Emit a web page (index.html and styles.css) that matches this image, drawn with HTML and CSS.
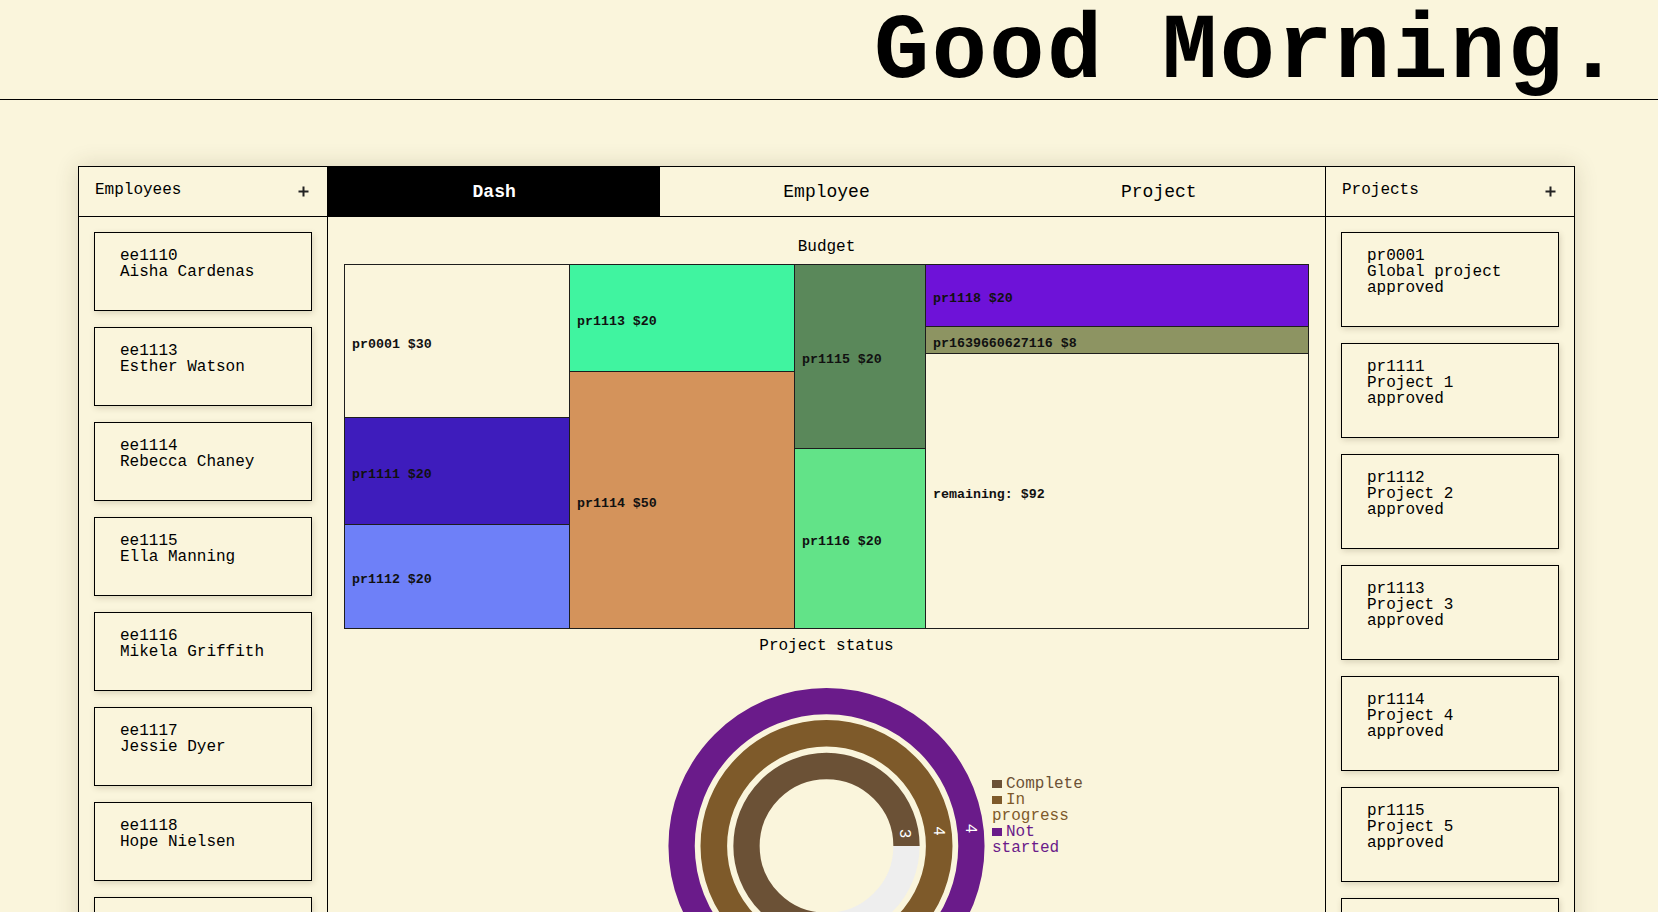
FILE: index.html
```html
<!DOCTYPE html>
<html lang="en">
<head>
<meta charset="utf-8">
<title>Dashboard</title>
<link rel="stylesheet" href="styles.css">
</head>
<body>
<header class="top">
  <h1 class="greeting">Good Morning.</h1>
</header>
<main class="board">
  <aside class="side side-left">
    <div class="side-head">
      <span class="side-title">Employees</span>
      <button class="add" type="button" aria-label="Add employee">
        <svg width="11" height="11" viewBox="0 0 11 11"><path d="M5.5 0.5v10M0.5 5.5h10" stroke="#222" stroke-width="2" fill="none"/></svg>
      </button>
    </div>
    <div class="card-list">
      <div class="card"><div>ee1110</div><div>Aisha Cardenas</div></div>
      <div class="card"><div>ee1113</div><div>Esther Watson</div></div>
      <div class="card"><div>ee1114</div><div>Rebecca Chaney</div></div>
      <div class="card"><div>ee1115</div><div>Ella Manning</div></div>
      <div class="card"><div>ee1116</div><div>Mikela Griffith</div></div>
      <div class="card"><div>ee1117</div><div>Jessie Dyer</div></div>
      <div class="card"><div>ee1118</div><div>Hope Nielsen</div></div>
      <div class="card"><div>ee1119</div><div>Nina Holt</div></div>
    </div>
  </aside>

  <section class="center">
    <nav class="tabs">
      <div class="tab active">Dash</div>
      <div class="tab">Employee</div>
      <div class="tab">Project</div>
    </nav>
    <div class="dash">
      <div class="chart-title">Budget</div>
      <div class="treemap">
        <div class="tm-col" style="width:224px">
          <div class="tm-cell cream" style="height:152px"><span>pr0001 $30</span></div>
          <div class="tm-cell indigo" style="height:107px"><span>pr1111 $20</span></div>
          <div class="tm-cell periwinkle" style="flex:1"><span>pr1112 $20</span></div>
        </div>
        <div class="tm-col" style="width:225px">
          <div class="tm-cell mint" style="height:106px"><span>pr1113 $20</span></div>
          <div class="tm-cell tan" style="flex:1"><span>pr1114 $50</span></div>
        </div>
        <div class="tm-col" style="width:131px">
          <div class="tm-cell fern" style="height:183px"><span>pr1115 $20</span></div>
          <div class="tm-cell lime" style="flex:1"><span>pr1116 $20</span></div>
        </div>
        <div class="tm-col" style="flex:1">
          <div class="tm-cell violet" style="height:61px"><span>pr1118 $20</span></div>
          <div class="tm-cell olive" style="height:27px"><span>pr1639660627116 $8</span></div>
          <div class="tm-cell cream" style="flex:1"><span>remaining: $92</span></div>
        </div>
      </div>
      <div class="chart-title">Project status</div>
      <div class="status">
        <svg class="rings" width="965" height="360" viewBox="0 0 965 360">
          <circle cx="482.5" cy="192" r="144.9" fill="none" stroke="#6a1b8a" stroke-width="26.3"/>
          <circle cx="482.5" cy="192" r="112.7" fill="none" stroke="#7e5a2a" stroke-width="26.6"/>
          <path d="M482.5 272 A80 80 0 0 0 562.5 192" fill="none" stroke="#eeeeee" stroke-width="26.3"/>
          <path d="M562.5 192 A80 80 0 1 0 482.5 272" fill="none" stroke="#6b5136" stroke-width="26.3"/>
          <text class="ring-label" transform="translate(559.5 179.5) rotate(90)">3</text>
          <text class="ring-label" transform="translate(593.5 177) rotate(90)">4</text>
          <text class="ring-label" transform="translate(625.5 174.5) rotate(90)">4</text>
        </svg>
        <div class="legend">
          <div class="legend-item complete"><i class="swatch"></i>Complete</div>
          <div class="legend-item progress"><i class="swatch"></i>In progress</div>
          <div class="legend-item notstarted"><i class="swatch"></i>Not started</div>
        </div>
      </div>
    </div>
  </section>

  <aside class="side side-right">
    <div class="side-head">
      <span class="side-title">Projects</span>
      <button class="add" type="button" aria-label="Add project">
        <svg width="11" height="11" viewBox="0 0 11 11"><path d="M5.5 0.5v10M0.5 5.5h10" stroke="#222" stroke-width="2" fill="none"/></svg>
      </button>
    </div>
    <div class="card-list">
      <div class="card"><div>pr0001</div><div>Global project</div><div>approved</div></div>
      <div class="card"><div>pr1111</div><div>Project 1</div><div>approved</div></div>
      <div class="card"><div>pr1112</div><div>Project 2</div><div>approved</div></div>
      <div class="card"><div>pr1113</div><div>Project 3</div><div>approved</div></div>
      <div class="card"><div>pr1114</div><div>Project 4</div><div>approved</div></div>
      <div class="card"><div>pr1115</div><div>Project 5</div><div>approved</div></div>
      <div class="card"><div>pr1116</div><div>Project 6</div><div>approved</div></div>
    </div>
  </aside>
</main>
</body>
</html>
```

FILE: styles.css
```css
html, body {
  margin: 0;
  padding: 0;
  overflow: hidden;
}

body {
  background: #faf5dc;
  color: #000;
  font-family: "Courier New", "Liberation Mono", monospace;
  font-size: 16px;
}

.top {
  height: 99px;
  border-bottom: 1px solid #000;
  box-sizing: content-box;
}

.greeting {
  margin: 0;
  padding: 0 35px 0 0;
  font-size: 92px;
  line-height: normal;
  letter-spacing: 2.4px;
  font-weight: bold;
  text-align: right;
}

.board {
  display: grid;
  grid-template-columns: 249px 997px 249px;
  width: 1495px;
  margin: 66px 0 0 78px;
  border: 1px solid #000;
  box-shadow: 0 0 22px rgba(60, 50, 20, 0.16);
  background: #faf5dc;
}

.side-left {
  border-right: 1px solid #000;
}

.side-right {
  border-left: 1px solid #000;
}

.side-head {
  height: 49px;
  border-bottom: 1px solid #000;
  display: flex;
  align-items: center;
  justify-content: space-between;
  padding: 0 18px 0 16px;
}

.side-title {
  font-size: 16px;
  line-height: 16px;
  margin-top: -3px;
}

.add {
  border: 0;
  background: none;
  padding: 0;
  width: 11px;
  height: 11px;
  display: flex;
  cursor: pointer;
}

.card-list {
  display: flex;
  flex-direction: column;
  gap: 16px;
  padding: 15px;
}

.card {
  border: 1px solid #000;
  padding: 15px 20px 30px 25px;
  font-size: 16px;
  line-height: 16px;
  white-space: pre;
  box-shadow: 1px 2px 6px rgba(60, 50, 20, 0.18);
}

.tabs {
  display: flex;
  height: 49px;
  border-bottom: 1px solid #000;
}

.tab {
  flex: 1;
  display: flex;
  align-items: center;
  justify-content: center;
  font-size: 18px;
}

.tab.active {
  background: #000;
  color: #fff;
  font-weight: bold;
}

.dash {
  padding: 22px 16px 0;
}

.chart-title {
  text-align: center;
  font-size: 16px;
  line-height: 16px;
}

.treemap {
  display: flex;
  height: 365px;
  margin: 9px 0;
  border: 1px solid #1d1d1d;
  box-sizing: border-box;
}

.tm-col {
  display: flex;
  flex-direction: column;
  box-sizing: border-box;
}

.tm-col + .tm-col {
  border-left: 1px solid #1d1d1d;
}

.tm-cell {
  display: flex;
  align-items: center;
  padding: 6px 0 0 7px;
  box-sizing: border-box;
  font-size: 13.3px;
  font-weight: bold;
  color: #111;
  white-space: nowrap;
  overflow: hidden;
}

.tm-cell + .tm-cell {
  border-top: 1px solid #1d1d1d;
}

.cream { background: #faf5dc; }
.indigo { background: #3e1cbc; }
.periwinkle { background: #6e80f8; }
.mint { background: #40f4a0; }
.tan { background: #d4935b; }
.fern { background: #5a885a; }
.lime { background: #62e388; }
.violet { background: #6e12d8; }
.olive { background: #8d9462; }

.status {
  position: relative;
  height: 360px;
}

.rings {
  display: block;
}

.ring-label {
  fill: #fff;
  font-family: "Courier New", "Liberation Mono", monospace;
  font-size: 16px;
  text-anchor: middle;
  dominant-baseline: central;
}

.legend {
  position: absolute;
  left: 648px;
  top: 122px;
  width: 96px;
  font-size: 16px;
  line-height: 16px;
}

.swatch {
  display: inline-block;
  width: 10px;
  height: 8px;
  margin-right: 4px;
  vertical-align: 0;
}

.complete { color: #6b5136; }
.complete .swatch { background: #6b5136; }
.progress { color: #7e5a2a; }
.progress .swatch { background: #7e5a2a; }
.notstarted { color: #6a1b8a; }
.notstarted .swatch { background: #6a1b8a; }
```
